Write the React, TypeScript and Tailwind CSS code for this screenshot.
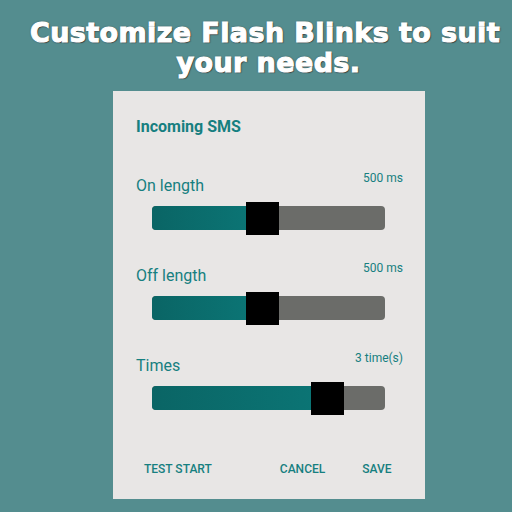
import React from "react";

function Slider({ label, value, fill, thumbLeft }: { label: string; value: string; fill: number; thumbLeft: number }) {
  return (
    <div className="flex flex-col">
      <div className="flex justify-between pr-[22px] h-[24px]">
        <span className="text-[16px] leading-[20px] text-[#167f80] mt-[4px]">{label}</span>
        <span className="text-[12px] leading-[14px] text-[#167f80] -mt-[1px]">{value}</span>
      </div>
      <div className="relative ml-[16px] mt-[10px] w-[233px] h-[24px] rounded-[4px] bg-[#6b6c69] overflow-visible">
        <div
          className="h-full rounded-l-[4px] bg-gradient-to-r from-[#0a6565] to-[#0b7474]"
          style={{ width: fill }}
        />
        <div className="absolute top-[-4px] w-[33px] h-[33px] bg-black" style={{ left: thumbLeft }} />
      </div>
    </div>
  );
}

export default function App() {
  return (
    <div
      className="w-[512px] h-[512px] bg-[#548d8f] flex flex-col overflow-hidden"
      style={{ fontFamily: "Roboto, 'Noto Sans', sans-serif" }}
    >
      <div
        className="pt-[18px] pl-[18px] text-center text-white text-[27px] leading-[30px] font-bold tracking-[0.4px] [text-shadow:0_0_2px_#333,1px_1px_1px_#333]"
        style={{ fontFamily: "'DejaVu Sans', sans-serif", WebkitTextStroke: "1.1px white" }}
      >
        <div className="whitespace-nowrap">Customize Flash Blinks to suit</div>
        <div className="pl-[7px]">your needs.</div>
      </div>
      <div className="ml-[113px] mt-[13px] w-[312px] h-[408px] bg-[#e8e6e5] pl-[23px] flex flex-col">
        <div className="mt-[26px] text-[16px] leading-[20px] font-bold text-[#167f80]">Incoming SMS</div>
        <div className="mt-[35px]">
          <Slider label="On length" value="500 ms" fill={95} thumbLeft={94} />
        </div>
        <div className="mt-[32px]">
          <Slider label="Off length" value="500 ms" fill={95} thumbLeft={94} />
        </div>
        <div className="mt-[32px]">
          <Slider label="Times" value="3 time(s)" fill={160} thumbLeft={159} />
        </div>
        <div className="mt-[52px] flex text-[12px] leading-[14px] font-medium text-[#167f80]">
          <span className="ml-[8px]">TEST START</span>
          <span className="ml-[68px]">CANCEL</span>
          <span className="ml-[37px]">SAVE</span>
        </div>
      </div>
    </div>
  );
}
